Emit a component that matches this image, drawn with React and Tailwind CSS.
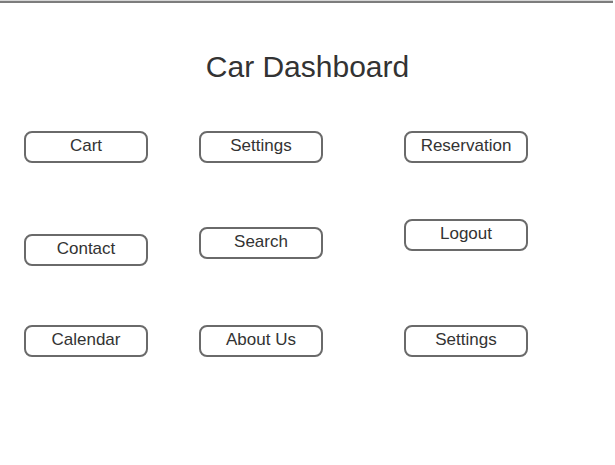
import React from 'react'

function Btn({ label, className = '' }) {
  return (
    <div
      className={`w-[124px] h-[32px] rounded-[8px] border-2 border-[#6a6a6a] flex items-center justify-center pb-[2px] text-[17px] leading-[20px] text-[#333] ${className}`}
    >
      {label}
    </div>
  )
}

export default function App() {
  return (
    <div className="w-[615px] h-[465px] bg-white overflow-hidden" style={{ fontFamily: '"Liberation Sans", Arial, sans-serif' }}>
      <div className="w-[613px] h-px bg-[#d6d6d6]" />
      <div className="w-[613px] h-[2px] bg-[#7d7d7d]" />

      <h1 className="mt-[47px] text-center text-[30px] leading-[34px] text-[#333] font-normal">
        Car Dashboard
      </h1>

      <div className="flex mt-[47px] pl-[24px]">
        <div className="flex flex-col">
          <Btn label="Cart" />
          <Btn label="Contact" className="mt-[71px]" />
          <Btn label="Calendar" className="mt-[59px]" />
        </div>
        <div className="flex flex-col ml-[51px]">
          <Btn label="Settings" />
          <Btn label="Search" className="mt-[64px]" />
          <Btn label="About Us" className="mt-[66px]" />
        </div>
        <div className="flex flex-col ml-[81px]">
          <Btn label="Reservation" />
          <Btn label="Logout" className="mt-[56px]" />
          <Btn label="Settings" className="mt-[74px]" />
        </div>
      </div>
    </div>
  )
}
